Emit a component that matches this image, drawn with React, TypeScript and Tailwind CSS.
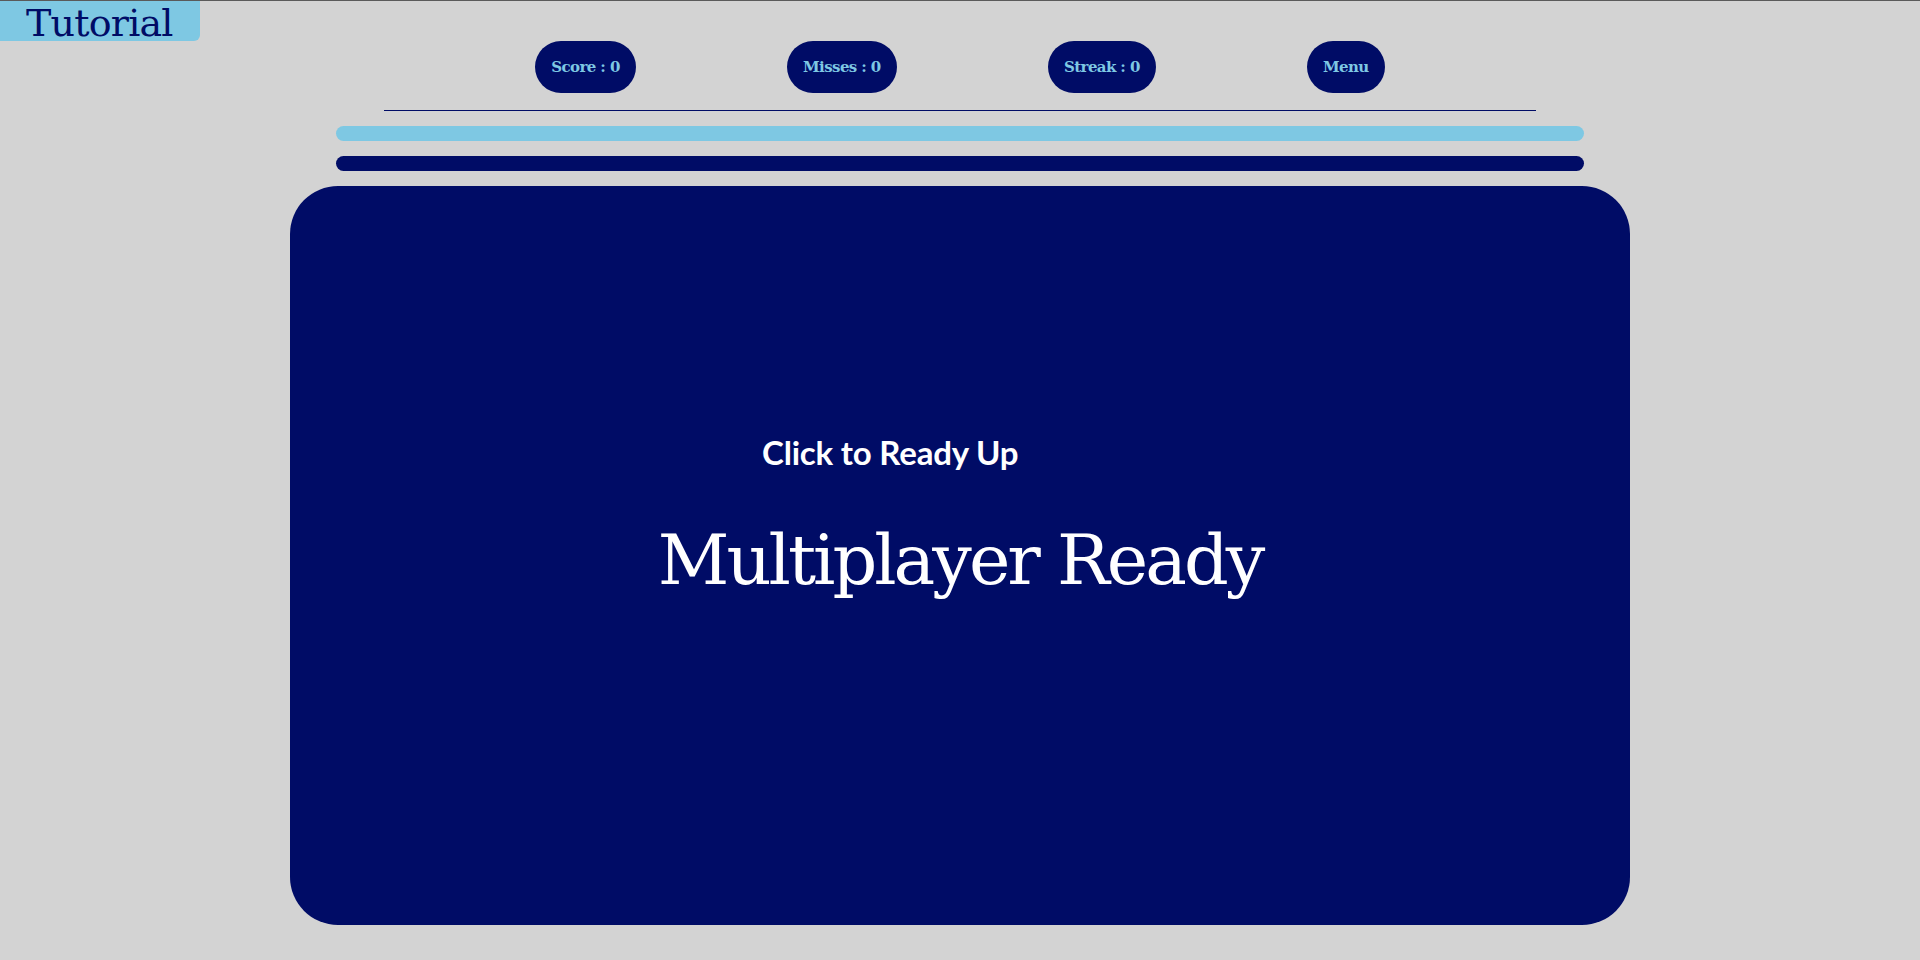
const stats = ["Score : 0", "Misses : 0", "Streak : 0", "Menu"];

export default function App() {
	return (
		<div className="min-h-[960px] w-full bg-[#d3d3d3] border-t border-[#5a5a5a] font-['DejaVu_Serif',serif]">
			<div className="w-[200px] h-[40px] bg-[#7ec8e3] rounded-br-md pl-[26px] pt-[3px] flex items-center">
				<span className="text-[38px] leading-none text-[#000c66] tracking-[-0.8px]">
					Tutorial
				</span>
			</div>

			<div className="w-[1152px] mx-auto flex justify-evenly">
				{stats.map((s) => (
					<button
						key={s}
						className="h-[52px] px-4 rounded-full bg-[#000c66] text-[#7ec8e3] text-[15px] font-bold tracking-[-0.6px]"
					>
						{s}
					</button>
				))}
			</div>

			<div className="w-[1152px] mx-auto mt-[17px] h-px bg-[#000c66]" />

			<div className="w-[1248px] mx-auto mt-[15px] h-[15px] rounded-full bg-[#7ec8e3]" />
			<div className="w-[1248px] mx-auto mt-[15px] h-[15px] rounded-full bg-[#000c66]" />

			<div className="w-[1340px] h-[739px] mx-auto mt-[15px] rounded-[48px] bg-[#000c66] pt-[250px] text-white">
				<p className="ml-[472px] font-['Lato',sans-serif] font-bold text-[33px] leading-none tracking-[-0.2px]">
					Click to Ready Up
				</p>
				<h1 className="mt-[56px] text-center text-[70px] leading-none tracking-[-3px]">
					Multiplayer Ready
				</h1>
			</div>
		</div>
	);
}
